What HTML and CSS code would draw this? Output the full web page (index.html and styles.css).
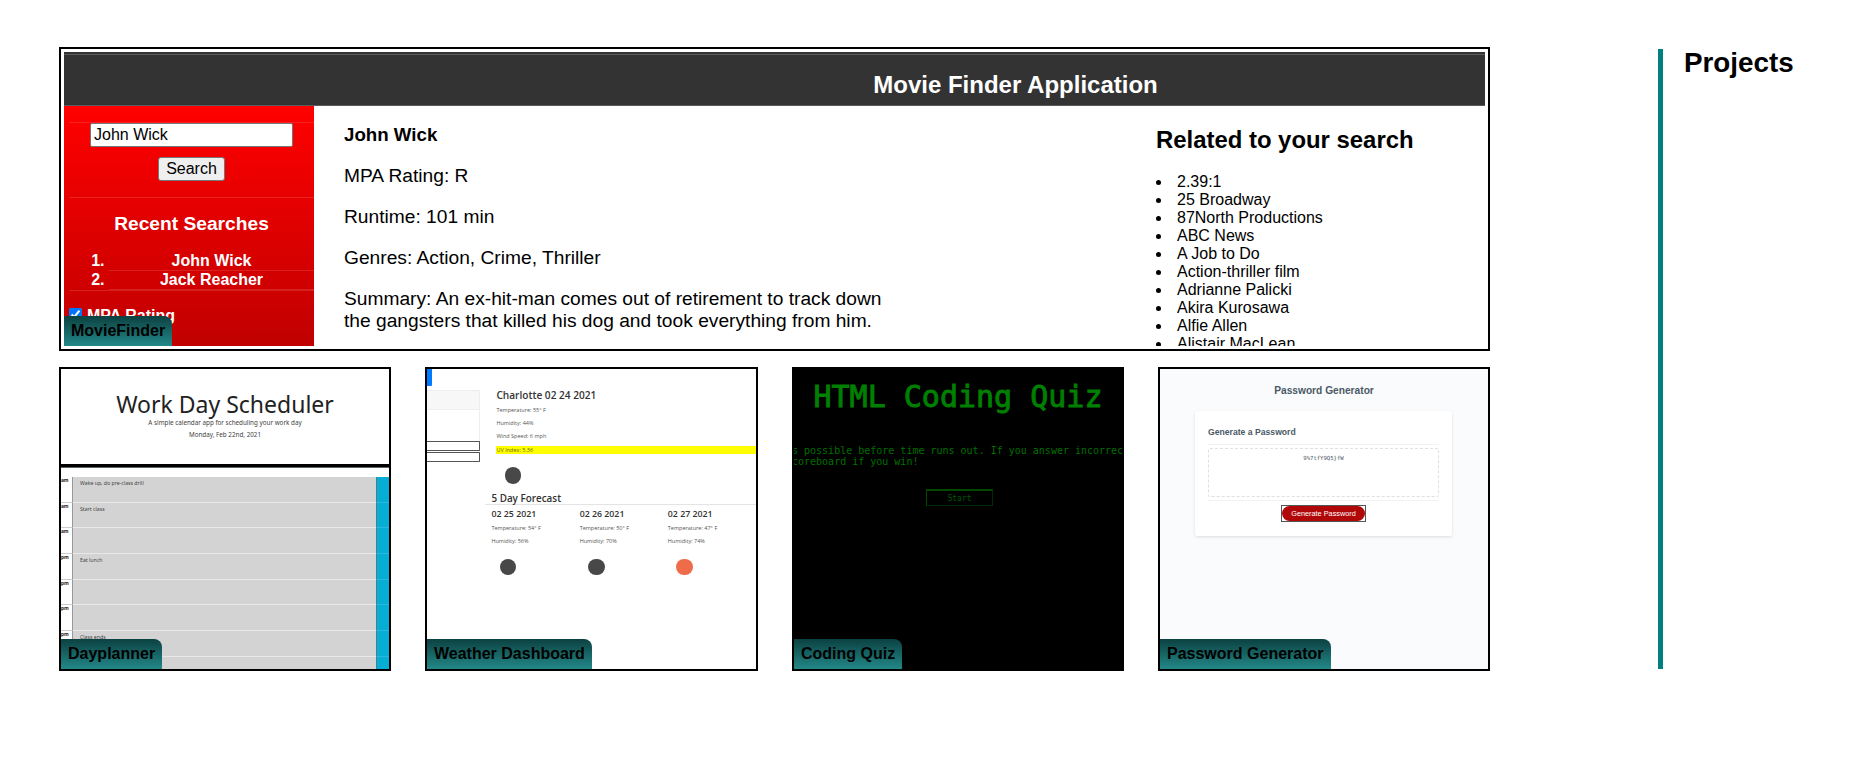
FILE: index.html
```html
<!DOCTYPE html>
<html lang="en">
<head>
<meta charset="utf-8">
<title>Projects</title>
<link rel="stylesheet" href="styles.css">
</head>
<body>
<main class="page">
  <div class="gallery">
    <article class="card featured">
      <div class="movie">
        <header class="movie-header"><h1>Movie Finder Application</h1></header>
        <div class="movie-body">
          <div class="sidebar">
            <form class="search">
              <input class="search-input" type="text" value="John Wick" aria-label="Movie">
              <button class="search-button" type="button">Search</button>
            </form>
            <section class="recent">
              <h3>Recent Searches</h3>
              <ol><li>John Wick</li><li>Jack Reacher</li></ol>
            </section>
            <label class="option"><input type="checkbox" checked>MPA Rating</label>
          </div>
          <div class="details">
            <h3>John Wick</h3>
            <p>MPA Rating: R</p>
            <p>Runtime: 101 min</p>
            <p>Genres: Action, Crime, Thriller</p>
            <p>Summary: An ex-hit-man comes out of retirement to track down<br>the gangsters that killed his dog and took everything from him.</p>
          </div>
          <aside class="related">
            <h2>Related to your search</h2>
            <ul>
              <li>2.39:1</li><li>25 Broadway</li><li>87North Productions</li><li>ABC News</li><li>A Job to Do</li>
              <li>Action-thriller film</li><li>Adrianne Palicki</li><li>Akira Kurosawa</li><li>Alfie Allen</li><li>Alistair MacLean</li>
            </ul>
          </aside>
        </div>
        <h4 class="tag">MovieFinder</h4>
      </div>
    </article>
    <div class="row">
      <article class="card small planner">
        <header class="planner-header">
          <h2>Work Day Scheduler</h2>
          <p>A simple calendar app for scheduling your work day</p>
          <p class="planner-date">Monday, Feb 22nd, 2021</p>
        </header>
        <div class="slots">
          <div class="slot"><b>am</b><span>Wake up, do pre-class drill</span><i></i></div>
          <div class="slot"><b>am</b><span>Start class</span><i></i></div>
          <div class="slot"><b>am</b><span></span><i></i></div>
          <div class="slot"><b>pm</b><span>Eat lunch</span><i></i></div>
          <div class="slot"><b>pm</b><span></span><i></i></div>
          <div class="slot"><b>pm</b><span></span><i></i></div>
          <div class="slot"><b>pm</b><span>Class ends</span><i></i></div>
          <div class="slot"><b></b><span></span><i></i></div>
        </div>
        <h4 class="tag">Dayplanner</h4>
      </article>
      <article class="card small weather">
        <div class="cities">
          <div class="city-button"></div>
          <div class="city-head"></div>
          <div class="city-body"></div>
          <div class="city-field"></div>
          <div class="city-field"></div>
        </div>
        <div class="report">
          <section class="today">
            <h3>Charlotte 02 24 2021</h3>
            <p>Temperature: 55° F</p>
            <p>Humidity: 44%</p>
            <p>Wind Speed: 6 mph</p>
            <p class="uv">UV Index: 5.36</p>
            <div class="dot"></div>
          </section>
          <h3 class="forecast-title">5 Day Forecast</h3>
          <div class="forecast">
            <section><h4>02 25 2021</h4><p>Temperature: 54° F</p><p>Humidity: 56%</p><div class="dot"></div></section>
            <section><h4>02 26 2021</h4><p>Temperature: 50° F</p><p>Humidity: 70%</p><div class="dot"></div></section>
            <section><h4>02 27 2021</h4><p>Temperature: 47° F</p><p>Humidity: 74%</p><div class="dot sun"></div></section>
          </div>
        </div>
        <h4 class="tag">Weather Dashboard</h4>
      </article>
      <article class="card small quiz">
        <h2>HTML Coding Quiz</h2>
        <p>s possible before time runs out. If you answer incorrec<br>coreboard if you win!</p>
        <div class="start">Start</div>
        <h4 class="tag">Coding Quiz</h4>
      </article>
      <article class="card small password">
        <h2>Password Generator</h2>
        <section class="panel">
          <h3>Generate a Password</h3>
          <div class="panel-body"><div class="result">9%7tfY9Q5}fW</div></div>
          <div class="focus-ring"><div class="generate">Generate Password</div></div>
        </section>
        <h4 class="tag">Password Generator</h4>
      </article>
    </div>
  </div>
  <div class="heading"><h2>Projects</h2></div>
</main>
</body>
</html>
```
FILE: styles.css
```css
* { box-sizing: border-box; }
body { margin: 0; background: #fff; color: #000; font-family: "Liberation Sans", Arial, sans-serif; font-size: 16px; }
h1, h2, h3, h4, p, ol, ul { margin: 0; }
.page { display: flex; align-items: flex-start; padding: 47px 0 0 59px; overflow: hidden; }
.gallery { width: 1431px; display: flex; flex-direction: column; gap: 16px; }
.heading { margin: 2px 0 0 168px; height: 620px; padding-left: 21px; border-left: 5px solid #008080; }
.heading h2 { font-size: 27.8px; line-height: 27px; }

.card { position: relative; height: 304px; border: 2px solid #000; overflow: hidden; }
.featured { padding: 3px; }
.row { display: flex; justify-content: space-between; }
.small { width: 332px; }
.small.weather { width: 333px; }
.tag { position: absolute; left: 0; bottom: 0; height: 30px; padding: 0 7px; line-height: 29px; font-size: 16px; font-family: "Liberation Sans", Arial, sans-serif; color: #000; border-top-right-radius: 8px; background: linear-gradient(#0c4141, #238888); }

/* Movie finder */
.movie { position: relative; height: 294px; overflow: hidden; }
.movie-header { height: 54px; padding-top: 2px; background: #333; }
.movie-header h1 { height: 52px; padding: 16px 0 0 482px; border-top: 1px solid #5a5a5a; border-bottom: 1px solid #5a5a5a; font-size: 24px; line-height: 28px; text-align: center; color: #fff; }
.movie-body { display: flex; height: 240px; }
.sidebar { width: 250px; padding: 16px 0 0 5px; background: linear-gradient(#f00, #c00000); color: #fff; font-weight: bold; }
.search { display: flex; flex-direction: column; align-items: center; gap: 10px; height: 76px; border: solid rgba(255,255,255,.13); border-width: 1px 0; }
.search-input { width: 203px; height: 24px; padding: 0 3px 1px; border: 1px solid #767676; border-radius: 2px; font: 16px "Liberation Sans", Arial, sans-serif; background: #fff; color: #000; }
.search-button { width: 67px; height: 24px; padding: 0; border: 1px solid #767676; border-radius: 3px; font: 16px "Liberation Sans", Arial, sans-serif; background: #efefef; color: #000; }
.recent { height: 93px; padding-top: 15px; border-bottom: 1px solid rgba(255,255,255,.13); text-align: center; }
.recent h3 { font-size: 19.2px; line-height: 22px; }
.recent ol { margin-top: 17px; padding-left: 40px; }
.recent li { line-height: 18px; border-bottom: 1px solid rgba(255,255,255,.13); }
.option { display: flex; gap: 5px; margin-top: 16px; line-height: 18px; }
.option input { width: 13px; height: 13px; margin: 1px 0 0; }
.details { flex: 0 0 842px; display: flex; flex-direction: column; gap: 19px; padding: 18px 0 0 30px; font-size: 19.2px; line-height: 22px; }
.details h3 { font-size: 18.72px; }
.related { padding-top: 20px; }
.related h2 { font-size: 23.9px; line-height: 28px; }
.related ul { margin-top: 19px; padding: 0; list-style: none; }
.related li { display: flex; align-items: center; gap: 16px; line-height: 18px; }
.related li::before { content: ""; width: 5px; height: 5px; border-radius: 50%; background: #000; }

/* Day planner */
.planner { font-family: "Noto Sans", "Open Sans", sans-serif; color: #444; }
.planner-header { height: 98px; padding-top: 23px; text-align: center; border-bottom: 3px solid #000; box-shadow: 0 1px #566; }
.planner-header h2 { font-size: 23px; line-height: 24px; margin-bottom: 1px; font-weight: 400; color: #222; }
.planner-header p { font-size: 6.3px; line-height: 11.5px; }
.slots { margin-top: 10px; }
.slot { display: flex; height: 25.67px; font-size: 5.2px; }
.slot b { width: 12px; border-right: 1px solid #999; border-bottom: 1px solid #ccc; line-height: 6px; font-size: 4.8px; color: #222; }
.slot span { flex: 1; padding: 2px 0 0 7px; background: #d3d3d3; border-bottom: 1px solid #e8e8e8; line-height: 8px; }
.slot i { width: 13px; background: #06aed5; border-left: 1px solid #47808f; border-bottom: 1px solid #29b9dc; }

/* Weather dashboard */
.weather { display: flex; font-family: "Open Sans", "Noto Sans", sans-serif; font-size: 5.5px; color: #555; }
.cities { width: 55px; }
.city-button { width: 5px; height: 17px; background: #007bff; border-bottom-right-radius: 1px; }
.city-head { margin-top: 4px; height: 20px; background: #f7f7f7; border: solid #eee; border-width: 1px 1px 1px 0; }
.city-body { height: 31px; border-right: 1px solid #eee; }
.city-field { height: 10px; border: 1px solid #555; border-left: 0; border-radius: 0 1px 1px 0; }
.city-field + .city-field { margin-top: 1px; }
.report { flex: 1; padding-left: 5px; }
.today { height: 120px; padding: 20px 0 0 11px; }
.today h3 { font-size: 10.1px; line-height: 12px; font-weight: 600; color: #333; margin-bottom: 5px; }
.today p, .forecast p { line-height: 8px; margin-bottom: 5.2px; white-space: nowrap; }
.today .uv { background: #ff0; color: #660; }
.dot { width: 16.5px; height: 16.5px; border-radius: 50%; background: #484848; margin: 13.5px 0 0 8.5px; }
.dot.sun { background: #ee6c4a; }
.forecast-title { height: 16px; padding-left: 6px; border-bottom: 1px solid #e4e4e4; font-size: 9.9px; line-height: 19px; font-weight: 600; color: #333; }
.forecast { display: flex; padding: 3px 0 0 6px; }
.forecast section { flex: 0 0 88.2px; }
.forecast h4 { font-size: 8.8px; line-height: 12px; font-weight: 600; color: #333; margin-bottom: 4px; }

/* Coding quiz */
.quiz { background: #000; color: #007000; font-family: "DejaVu Sans Mono", monospace; }
.quiz h2 { padding-top: 10px; text-align: center; font-size: 30px; line-height: 36px; font-weight: 400; -webkit-text-stroke: .9px #008000; color: #008000; white-space: nowrap; }
.quiz p { margin: 31px 0 0 -2px; font-size: 10px; line-height: 10.7px; white-space: nowrap; }
.start { width: 67px; height: 17px; margin: 22px 0 0 132px; border: 1px solid #004800; border-right-color: #002a00; border-bottom-color: #002a00; border-top-width: 2px; font-size: 8px; line-height: 15px; text-align: center; color: #005800; }

/* Password generator */
.password { background: #fafbfd; color: #4b5965; }
.password h2 { padding-top: 15px; text-align: center; font-size: 10.2px; line-height: 14px; }
.panel { width: 257px; height: 125px; margin: 13px 0 0 35px; padding: 16px 13px 0; background: #fff; border-radius: 2px; box-shadow: 0 1px 3px rgba(0,0,0,.12); }
.panel h3 { font-size: 8.65px; line-height: 10px; }
.panel-body { height: 57px; margin-top: 7px; padding: 3px 0; border: solid #f1f2f3; border-width: 1px 0; }
.result { height: 49px; padding-top: 5px; border: 1px dashed #dce1e5; border-radius: 2px; text-align: center; font: 5.6px/8px "DejaVu Sans Mono", monospace; }
.focus-ring { width: 85px; height: 17px; margin: 4px auto 0; border: 1px solid #555; }
.generate { height: 15px; border-radius: 7.5px; background: #b00808; color: #fff; text-align: center; font-size: 7.3px; line-height: 15px; }
```
